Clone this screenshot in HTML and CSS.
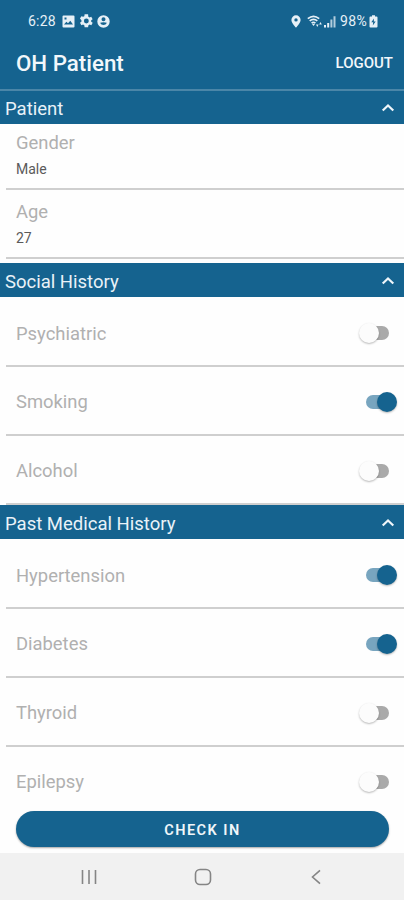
FILE: index.html
```
<!DOCTYPE html>
<html lang="en">
<head>
<meta charset="utf-8">
<meta name="viewport" content="width=device-width, initial-scale=1">
<title>OH Patient</title>
<link rel="stylesheet" href="styles.css">
</head>
<body>
<div class="status">
  <div class="status-left">
    <span class="time">6:28</span>
    <svg width="13" height="13" viewBox="0 0 13 13"><path fill="currentColor" fill-rule="evenodd" d="M1.5.5h10a1 1 0 0 1 1 1v10a1 1 0 0 1-1 1h-10a1 1 0 0 1-1-1v-10a1 1 0 0 1 1-1zM2 9.500h9L8.300 5.800 6 8.300 4.400 6.800zM2.500 2.500v2h2v-2z"/></svg>
    <svg width="14" height="14" viewBox="2 2 20 20"><path fill="currentColor" fill-rule="evenodd" d="M19.400 13a7.500 7.500 0 0 0 0-2l2.100-1.600-2-3.500-2.500 1a7.300 7.300 0 0 0-1.700-1L15 2.500h-5l-.4 2.600a8 8 0 0 0-1.700 1l-2.500-1-2 3.500L5.500 11a7.500 7.500 0 0 0 0 2l-2.100 1.600 2 3.500 2.500-1a7.300 7.300 0 0 0 1.700 1l.4 2.900h5l.4-2.900a8 8 0 0 0 1.700-1l2.500 1 2-3.500zM12.500 15.500a3.500 3.500 0 1 1 0-7 3.500 3.500 0 0 1 0 7z"/></svg>
    <svg width="13" height="13" viewBox="0 0 13 13"><path fill="currentColor" fill-rule="evenodd" d="M6.500.3a6.200 6.200 0 1 1 0 12.400 6.200 6.200 0 0 1 0-12.400zM6.500 2.200a2 2 0 1 0 0 4 2 2 0 0 0 0-4zM3.200 7.800c.6 1.500 1.800 2.200 3.300 2.200s2.700-.7 3.300-2.200c-1.500-.7-5.100-.7-6.600 0z"/></svg>
  </div>
  <div class="status-right">
    <svg class="pin" width="10" height="13" viewBox="0 0 10 13"><path fill="currentColor" fill-rule="evenodd" d="M5 .3a4.600 4.600 0 0 1 4.600 4.600C9.600 8 5 12.600 5 12.600S.4 8 .4 4.900A4.600 4.600 0 0 1 5 .3zM5 3.200a1.700 1.700 0 1 0 0 3.400 1.700 1.700 0 0 0 0-3.400z"/></svg>
    <svg class="wifi" width="16" height="13" viewBox="0 0 16 13"><g fill="none" stroke="currentColor" stroke-width="1.700"><path d="M.8 3.600Q6.500-1 12.200 3.600M2.700 5.900Q6.500 2.700 10.300 5.900M4.600 8.100Q6.500 6.500 8.400 8.100"/></g><path fill="currentColor" d="M5 9h3l-1.500 2zM9 9.500h2.600L10.300 12zM12.200 9.500 13.500 7l1.300 2.500z"/></svg>
    <svg class="signal" width="12" height="13" viewBox="0 0 12 13"><path fill="currentColor" d="M0 10h2v2.500H0zM3.200 8h2v4.500h-2z"/><path fill="currentColor" opacity=".75" d="M6.400 4.500h2v8h-2zM9.500 1.200h2v11.300h-2z"/></svg>
    <span class="battery-text">98%</span>
    <svg width="9" height="13" viewBox="0 0 9 13"><path fill="currentColor" fill-rule="evenodd" d="M3 .3h3v1.200h1.500a1 1 0 0 1 1 1v9a1 1 0 0 1-1 1h-6a1 1 0 0 1-1-1v-9a1 1 0 0 1 1-1H3zM5 3.500 2.300 7.300h1.900L3.800 10.500l2.900-4H4.800z"/></svg>
  </div>
</div>
<header class="appbar">
  <h1>OH Patient</h1>
  <span class="logout">LOGOUT</span>
</header>
<main>
  <section>
    <h2 class="first"><span>Patient</span><svg class="chevron" width="14" height="10" viewBox="0 0 14 10"><path d="M1.700 7.500 7 2.500l5.300 5"/></svg></h2>
    <div class="field gender"><span class="label">Gender</span><span class="value">Male</span></div>
    <div class="field age"><span class="label">Age</span><span class="value">27</span></div>
  </section>
  <section class="social">
    <h2><span>Social History</span><svg class="chevron" width="14" height="10" viewBox="0 0 14 10"><path d="M1.700 7.500 7 2.500l5.300 5"/></svg></h2>
    <div class="row"><span class="label">Psychiatric</span><i class="switch"></i></div>
    <div class="row"><span class="label">Smoking</span><i class="switch on"></i></div>
    <div class="row"><span class="label">Alcohol</span><i class="switch"></i></div>
  </section>
  <section>
    <h2><span>Past Medical History</span><svg class="chevron" width="14" height="10" viewBox="0 0 14 10"><path d="M1.700 7.500 7 2.500l5.300 5"/></svg></h2>
    <div class="row"><span class="label">Hypertension</span><i class="switch on"></i></div>
    <div class="row"><span class="label">Diabetes</span><i class="switch on"></i></div>
    <div class="row"><span class="label">Thyroid</span><i class="switch"></i></div>
    <div class="row"><span class="label">Epilepsy</span><i class="switch"></i></div>
  </section>
</main>
<div class="action"><button>CHECK IN</button></div>
<nav>
  <svg width="16" height="16" viewBox="0 0 16 16"><path d="M1.500 1v14M8 1v14M14.500 1v14"/></svg>
  <svg width="18" height="18" viewBox="0 0 18 18"><rect x="1.500" y="1.500" width="15" height="15" rx="4.500"/></svg>
  <svg class="back" width="12" height="16" viewBox="0 0 12 16"><path d="M10 1.300 2.500 8l7.500 6.700"/></svg>
</nav>
</body>
</html>
```
FILE: styles.css
```
* { box-sizing: border-box; }
body {
  margin: 0;
  width: 404px;
  height: 900px;
  overflow: hidden;
  display: flex;
  flex-direction: column;
  background: #fefefe;
  font-family: Roboto, "Liberation Sans", sans-serif;
}
svg { display: block; flex: none; }
h1, h2 { margin: 0; }

.status {
  flex: none;
  height: 42px;
  padding: 0 26px 0 28px;
  display: flex;
  justify-content: space-between;
  align-items: center;
  background: #15638f;
  color: #e6f0f7;
  font-size: 14px;
}
.status-left, .status-right { display: flex; align-items: center; }
.time { width: 34px; letter-spacing: 0.2px; }
.status-left svg + svg { margin-left: 4px; }
.wifi { margin-left: 6px; }
.signal { margin-left: 1px; }
.battery-text { margin-left: 4px; width: 29px; font-size: 14px; letter-spacing: 0.4px; }

.appbar {
  flex: none;
  height: 49px;
  padding: 0 11px 4px 16px;
  display: flex;
  justify-content: space-between;
  align-items: center;
  background: #15638f;
  border-bottom: 2px solid #4b86a8;
  color: #f2f7fb;
}
h1 { padding-bottom: 2px; font-size: 22.300px; font-weight: 500; line-height: 26px; }
.logout { padding-bottom: 1px; font-size: 15px; font-weight: 500; }

main { flex: 1; min-height: 0; overflow: hidden; }
h2 {
  height: 34px;
  padding: 3px 9px 0 5px;
  display: flex;
  justify-content: space-between;
  align-items: center;
  background: #15638f;
  color: #e9f2f8;
  font-size: 18.500px;
  font-weight: 400;
}
h2.first { height: 33px; padding-top: 2px; }
.chevron { margin-bottom: 1px; fill: none; stroke: #eff6fa; stroke-width: 2.200; }

.field, .row {
  height: 69px;
  margin-left: 6px;
  border-bottom: 2px solid #cfcfcf;
}
.field { padding: 11px 0 0 10px; display: flex; flex-direction: column; }
.gender { height: 66px; padding-top: 8px; }
.label { color: #b0b0b0; font-size: 18.400px; line-height: 22px; }
.value { margin-top: 7px; color: #5a5a5a; font-size: 14px; line-height: 17px; }
.row {
  padding: 2px 7px 0 10px;
  display: flex;
  justify-content: space-between;
  align-items: center;
}
.row .label { padding-top: 1px; }
h2 + .row { height: 70px; padding-top: 4px; }
.social { margin-top: 4px; }

.switch {
  width: 38px;
  height: 20px;
  display: grid;
  align-items: center;
}
.switch::before, .switch::after { content: ""; grid-area: 1 / 1; }
.switch::before {
  width: 27px;
  height: 14px;
  margin-left: 3px;
  border-radius: 7px;
  background: #aaa;
}
.switch::after {
  width: 20px;
  height: 20px;
  border-radius: 50%;
  background: #fcfcfc;
  box-shadow: 0 1px 2px rgba(0, 0, 0, .28);
}
.switch.on::before { margin-left: 7px; background: #78a5bf; }
.switch.on::after { margin-left: 18px; background: #15638f; }

.action { flex: none; height: 42px; padding: 0 15px 6px 16px; }
button {
  display: block;
  width: 100%;
  height: 36px;
  padding: 3px 0 0;
  border: 0;
  border-radius: 18px;
  background: #15638f;
  box-shadow: 0 1px 2px rgba(0, 0, 0, .35);
  color: #f0f6fa;
  font: 600 14.500px Roboto, "Liberation Sans", sans-serif;
  letter-spacing: 1.500px;
}
nav {
  flex: none;
  height: 47px;
  padding: 1px 82px 0 81px;
  display: flex;
  align-items: center;
  gap: 97px;
  background: #f1f1f1;
}
.back { margin-left: 1px; }
nav svg { fill: none; stroke: #858585; stroke-width: 1.600; }
```
